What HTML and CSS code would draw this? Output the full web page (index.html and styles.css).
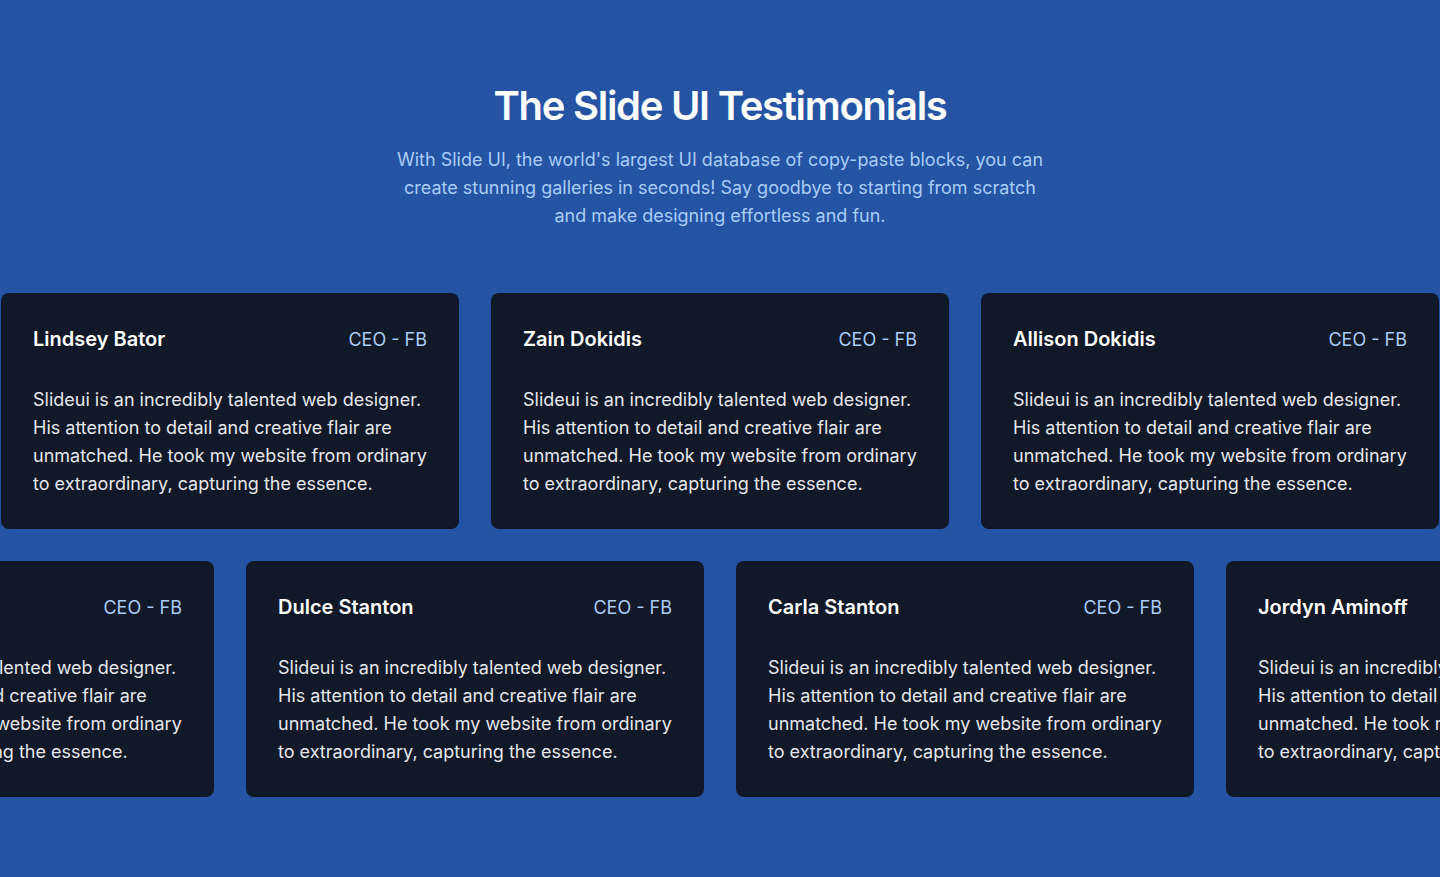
FILE: index.html
```html
<!DOCTYPE html>
<html lang="en">
<head>
<meta charset="utf-8">
<title>The Slide UI Testimonials</title>
<link rel="stylesheet" href="styles.css">
</head>
<body>
<section class="section">
  <header class="intro">
    <h1 class="title">The Slide UI Testimonials</h1>
    <p class="subtitle">With Slide UI, the world's largest UI database of copy-paste blocks, you can create stunning galleries in seconds! Say goodbye to starting from scratch and make designing effortless and fun.</p>
  </header>
  <div class="rows">
    <div class="row row-a">
      <article class="card">
        <div class="card-head"><h3 class="name">Lindsey Bator</h3><span class="role">CEO - FB</span></div>
        <p class="quote">Slideui is an incredibly talented web designer. His attention to detail and creative flair are unmatched. He took my website from ordinary to extraordinary, capturing the essence.</p>
      </article>
      <article class="card">
        <div class="card-head"><h3 class="name">Zain Dokidis</h3><span class="role">CEO - FB</span></div>
        <p class="quote">Slideui is an incredibly talented web designer. His attention to detail and creative flair are unmatched. He took my website from ordinary to extraordinary, capturing the essence.</p>
      </article>
      <article class="card">
        <div class="card-head"><h3 class="name">Allison Dokidis</h3><span class="role">CEO - FB</span></div>
        <p class="quote">Slideui is an incredibly talented web designer. His attention to detail and creative flair are unmatched. He took my website from ordinary to extraordinary, capturing the essence.</p>
      </article>
    </div>
    <div class="row row-b">
      <article class="card">
        <div class="card-head"><h3 class="name">Kaylynn Stanton</h3><span class="role">CEO - FB</span></div>
        <p class="quote">Slideui is an incredibly talented web designer. His attention to detail and creative flair are unmatched. He took my website from ordinary to extraordinary, capturing the essence.</p>
      </article>
      <article class="card">
        <div class="card-head"><h3 class="name">Dulce Stanton</h3><span class="role">CEO - FB</span></div>
        <p class="quote">Slideui is an incredibly talented web designer. His attention to detail and creative flair are unmatched. He took my website from ordinary to extraordinary, capturing the essence.</p>
      </article>
      <article class="card">
        <div class="card-head"><h3 class="name">Carla Stanton</h3><span class="role">CEO - FB</span></div>
        <p class="quote">Slideui is an incredibly talented web designer. His attention to detail and creative flair are unmatched. He took my website from ordinary to extraordinary, capturing the essence.</p>
      </article>
      <article class="card">
        <div class="card-head"><h3 class="name">Jordyn Aminoff</h3><span class="role">CEO - FB</span></div>
        <p class="quote">Slideui is an incredibly talented web designer. His attention to detail and creative flair are unmatched. He took my website from ordinary to extraordinary, capturing the essence.</p>
      </article>
    </div>
  </div>
</section>
</body>
</html>
```
FILE: styles.css
```css
* { box-sizing: border-box; }
html, body { margin: 0; padding: 0; }
body {
  background: #2454a3;
  font-family: Inter, "Noto Sans", sans-serif;
  overflow: hidden;
}
.section {
  padding: 82px 0 80px;
  min-height: 877px;
}
.intro {
  text-align: center;
  max-width: 652px;
  margin: 0 auto;
}
.title {
  margin: 0;
  font-size: 40px;
  line-height: 48px;
  font-weight: 600;
  letter-spacing: -0.032em;
  color: #ffffff;
}
.subtitle {
  margin: 16px 0 0;
  font-size: 18px;
  line-height: 28px;
  color: #a9cdf8;
}
.rows {
  margin-top: 63px;
  display: flex;
  flex-direction: column;
  gap: 32px;
  overflow: hidden;
}
.row {
  display: flex;
  gap: 32px;
}
.row-a { margin-left: 1px; }
.row-b { margin-left: -244px; }
.card {
  flex: 0 0 458px;
  background: #111827;
  border-radius: 8px;
  padding: 33px 32px 31px;
}
.card-head {
  display: flex;
  justify-content: space-between;
  align-items: flex-start;
  height: 28px;
}
.name {
  margin: 0;
  font-size: 20px;
  line-height: 26px;
  font-weight: 600;
  color: #ffffff;
}
.role {
  font-size: 18px;
  line-height: 28px;
  color: #a9cdf8;
}
.quote {
  margin: 32px 0 0;
  font-size: 18px;
  line-height: 28px;
  color: #e5e7eb;
}
```
